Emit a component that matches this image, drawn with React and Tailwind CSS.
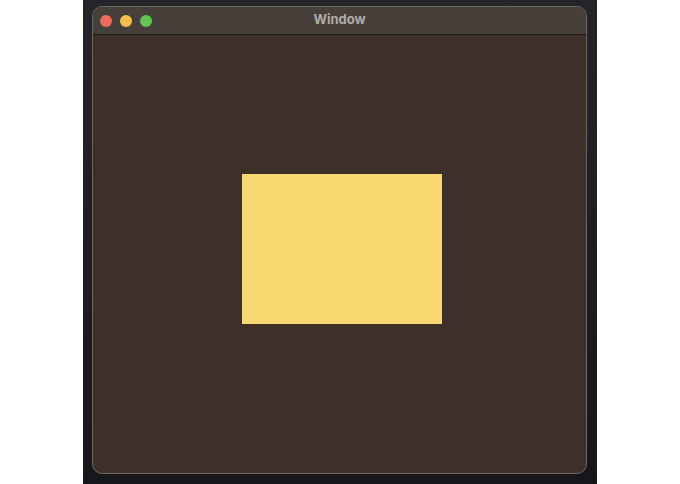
export default function App() {
  return (
    <div className="w-[680px] h-[484px] bg-white flex justify-center" style={{ fontFamily: '"Inter", "Liberation Sans", sans-serif' }}>
      <div className="w-[514px] h-full bg-gradient-to-b from-[#25242a] to-[#17161a] pl-[9px] pr-[10px] pt-[6px] pb-[10px] flex">
        <div className="flex-1 flex flex-col rounded-[10px] border border-[#6e6762] bg-[#3d3029] overflow-hidden">
          <div className="relative h-[28px] bg-[#463f3a] border-b border-[#1b1714] flex items-center px-[7px] gap-[8px]">
            <span className="w-[12px] h-[12px] rounded-full bg-[#ed6a5e]" />
            <span className="w-[12px] h-[12px] rounded-full bg-[#f5bf4f]" />
            <span className="w-[12px] h-[12px] rounded-full bg-[#61c554]" />
            <div className="absolute inset-0 flex items-center justify-center pb-[1px] text-[13px] font-bold text-[#b3aba5] pointer-events-none">
              Window
            </div>
          </div>
          <div className="flex-1 flex items-center justify-center pl-[5px] pb-[11px]">
            <div className="w-[200px] h-[150px] bg-[#f8d870]" />
          </div>
        </div>
      </div>
    </div>
  );
}
